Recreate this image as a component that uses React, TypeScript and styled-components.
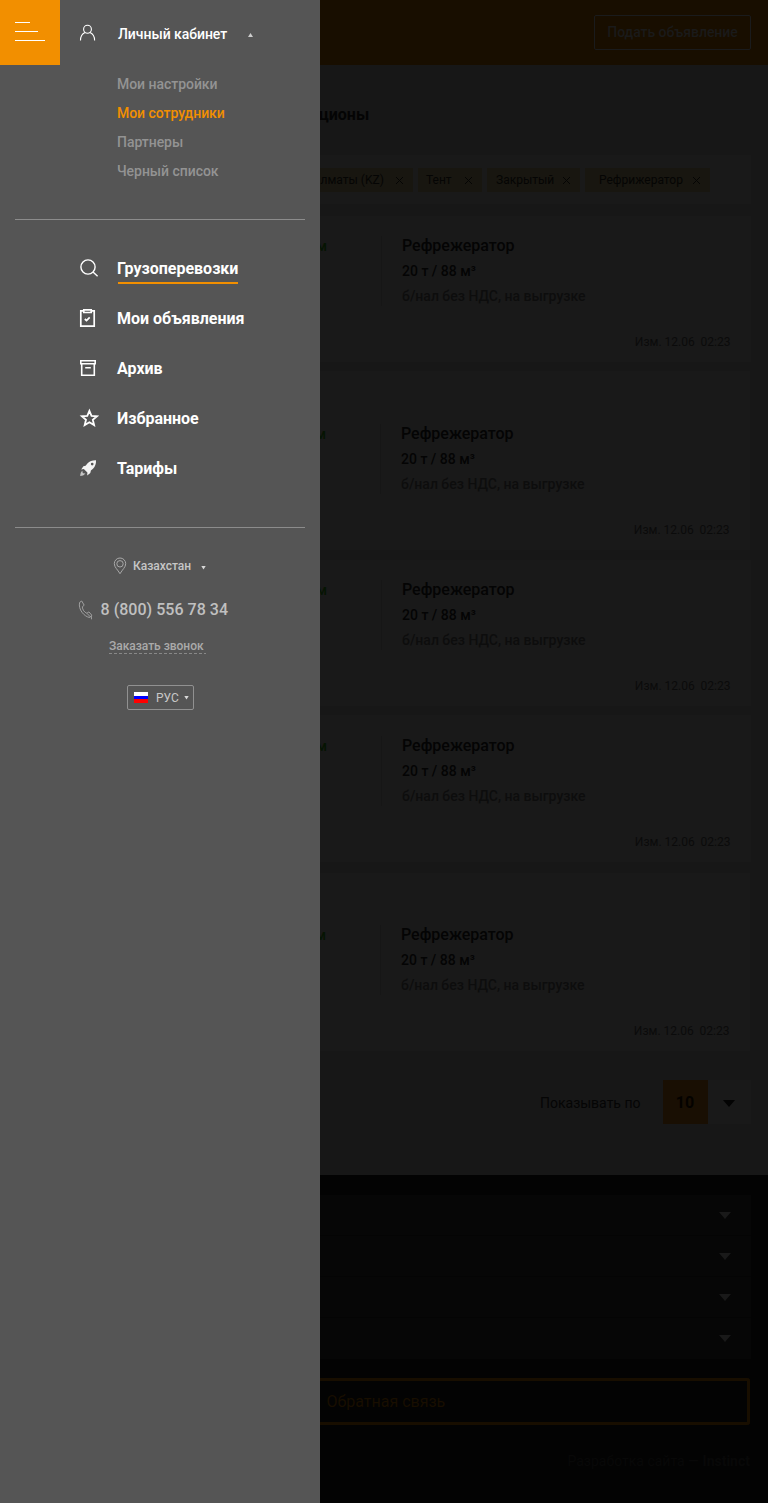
import React from "react";
import styled, { createGlobalStyle } from "styled-components";

const Global = createGlobalStyle`
  * { box-sizing: border-box; }
  body { margin: 0; background: #171717; font-family: Roboto, "Liberation Sans", sans-serif; }
  ul { list-style: none; margin: 0; padding: 0; }
`;

const Shell = styled.div`
  display: flex;
  width: 768px;
  height: 1503px;
  overflow: hidden;
`;

/* Drawer */
const Drawer = styled.aside`
  display: flex;
  flex-direction: column;
  flex: 0 0 320px;
  background: #555;
`;

const DrawerTop = styled.div`
  display: flex;
  align-items: flex-start;
  height: 65px;
`;

const Burger = styled.div`
  display: flex;
  flex-direction: column;
  gap: 8px;
  width: 60px;
  height: 65px;
  padding: 22px 0 0 15px;
  background: #f28f00;
`;

const BurgerLine = styled.span<{ $w: number }>`
  width: ${(p) => p.$w}px;
  height: 1px;
  background: #fff;
`;

const Account = styled.div`
  display: flex;
  align-items: flex-start;
  padding: 24px 0 0 19px;
  color: #fff;
  font-size: 14px;
  font-weight: 500;
  letter-spacing: -0.04px;
  line-height: 20px;
`;

const AccountName = styled.span`
  width: 130px;
  margin-left: 21px;
  white-space: nowrap;
`;

const Caret = styled.i<{ $w: number; $h: number; $color: string; $up?: boolean }>`
  display: block;
  width: ${(p) => p.$w}px;
  height: ${(p) => p.$h}px;
  background: ${(p) => p.$color};
  clip-path: ${(p) => (p.$up ? "polygon(50% 0, 100% 100%, 0 100%)" : "polygon(0 0, 100% 0, 50% 100%)")};
`;

const AccountCaret = styled(Caret)`
  margin-top: 9px;
`;

const RegionCaret = styled(Caret)`
  margin: 3px 0 0 1px;
`;

const SubMenu = styled.ul`
  padding: 5px 0 0 117px;
  height: 154px;
`;

const SubItem = styled.li<{ $active?: boolean }>`
  height: 29px;
  line-height: 29px;
  font-size: 14px;
  font-weight: 500;
  letter-spacing: -0.04px;
  color: ${(p) => (p.$active ? "#f28f00" : "#939393")};
`;

const Divider = styled.div`
  height: 1px;
  margin: 0 15px;
  background: #8c8c8c;
`;

const Nav = styled.nav`
  height: 307px;
  padding-top: 23px;
`;

const NavItem = styled.a`
  display: flex;
  align-items: center;
  height: 50px;
  padding-left: 79px;
  color: #fff;
  font-size: 16px;
  font-weight: 700;
`;

const NavIcon = styled.span`
  width: 38px;
  height: 20px;
  svg { display: block; }
`;

const NavText = styled.span<{ $active?: boolean }>`
  line-height: 27px;
  padding: 2px 0;
  background: ${(p) =>
    p.$active ? "linear-gradient(#f28f00, #f28f00) 1px 100% / 120px 2px no-repeat" : "none"};
`;

const Region = styled.div`
  display: flex;
  align-items: center;
  height: 20px;
  margin: 28px 0 0 113px;
  color: #c6c6c6;
  font-size: 12px;
  font-weight: 500;
`;

const RegionName = styled.span`
  width: 67px;
  margin-left: 6px;
`;

const Phone = styled.div`
  display: flex;
  align-items: center;
  height: 22px;
  margin: 22px 0 0 78px;
  color: #c0c0c0;
  font-size: 16px;
  font-weight: 500;
  letter-spacing: 0.03px;
  svg { margin: 2px 7.5px 0 0; }
`;

const Callback = styled.div`
  width: 97px;
  height: 18px;
  margin: 16px 0 0 109px;
  color: #aaa;
  font-size: 12px;
  font-weight: 500;
  letter-spacing: -0.03px;
  line-height: 20px;
  white-space: nowrap;
  background: repeating-linear-gradient(90deg, #888 0 3px, transparent 3px 5px) bottom / 100% 1px no-repeat;
`;

const Language = styled.div`
  display: flex;
  align-items: center;
  width: 67px;
  height: 25px;
  margin: 31px 0 0 127px;
  padding-left: 6px;
  border: 1px solid #919191;
  border-radius: 2px;
  color: #c8c8c8;
  font-size: 12px;
  font-weight: 400;
`;

const Flag = styled.span`
  width: 14px;
  height: 11px;
  background: linear-gradient(#fff 0 4px, #00f 4px 7px, #f00 7px);
`;

const LanguageName = styled.span`
  width: 28px;
  margin-left: 8px;
`;

/* Dimmed page */
const Page = styled.div`
  display: flex;
  flex-direction: column;
  flex: 0 0 448px;
  overflow: hidden;
  background: #171717;
`;

const Header = styled.header`
  display: flex;
  justify-content: flex-end;
  height: 65px;
  padding: 15px 17px 0 0;
  background: #180e00;
`;

const PostButton = styled.div`
  width: 157px;
  height: 35px;
  border: 1px solid #1a1b1c;
  border-radius: 2px;
  color: #1a1a1a;
  font-size: 14px;
  font-weight: 500;
  letter-spacing: -0.04px;
  line-height: 33px;
  text-align: center;
`;

const Title = styled.h1`
  height: 90px;
  margin: 0 0 0 -1px;
  padding-top: 40px;
  color: #040404;
  font-size: 16px;
  font-weight: 700;
  line-height: 20px;
`;

const Filters = styled.div`
  display: flex;
  gap: 5px;
  width: 431px;
  height: 49px;
  padding-top: 13px;
  background: #191919;
`;

const Chip = styled.div<{ $w: number; $pad: number; $end: number }>`
  display: flex;
  flex: 0 0 ${(p) => p.$w}px;
  align-items: center;
  justify-content: space-between;
  height: 24px;
  padding: 0 ${(p) => p.$end}px 0 ${(p) => p.$pad}px;
  background: #181610;
  color: #050504;
  font-size: 12px;
`;

const ChipText = styled.span`
  white-space: nowrap;
`;

const Card = styled.section<{ $top: number; $h: number; $narrow?: boolean }>`
  display: flex;
  align-items: flex-end;
  width: ${(p) => (p.$narrow ? 430 : 431)}px;
  height: ${(p) => p.$h}px;
  margin-top: ${(p) => p.$top}px;
  padding-bottom: 10px;
  background: #191919;
`;

const Distance = styled.div<{ $narrow?: boolean }>`
  display: flex;
  justify-content: flex-end;
  flex: 0 0 ${(p) => (p.$narrow ? 60 : 61)}px;
  min-width: 0;
  height: 116px;
  padding-right: 54px;
  color: #051402;
  font-size: 14px;
  font-weight: 500;
  line-height: 20px;
`;

const Details = styled.div`
  display: flex;
  flex-direction: column;
  flex: 1;
  height: 116px;
`;

const Specs = styled.div`
  height: 70px;
  padding-left: 20px;
  border-left: 1px solid #161616;
`;

const Body = styled.div`
  color: #040404;
  font-size: 16px;
  font-weight: 500;
  line-height: 20px;
`;

const Capacity = styled.div`
  margin-top: 5px;
  color: #040404;
  font-size: 14px;
  font-weight: 500;
  line-height: 20px;
`;

const Payment = styled.div`
  margin-top: 5px;
  color: #0d0d0d;
  font-size: 14px;
  font-weight: 500;
  line-height: 20px;
`;

const Updated = styled.div`
  margin-top: 26px;
  padding-right: 20.5px;
  color: #0b0b0b;
  font-size: 12px;
  line-height: 20px;
  text-align: right;
  white-space: pre;
`;

const Pager = styled.div`
  display: flex;
  align-items: center;
  justify-content: flex-end;
  height: 44px;
  margin: 29px 17px 51px 0;
  color: #050505;
  font-size: 14px;
`;

const PagerLabel = styled.span`
  padding-top: 2px;
`;

const PageSize = styled.span`
  width: 45px;
  height: 44px;
  margin-left: 22.5px;
  padding-right: 1px;
  background: #190f03;
  color: #040200;
  font-size: 16px;
  font-weight: 700;
  line-height: 46px;
  text-align: center;
`;

const PageSizeToggle = styled.span`
  display: flex;
  align-items: center;
  width: 43px;
  height: 44px;
  padding: 3px 0 0 15px;
  background: #191919;
`;

const Footer = styled.footer`
  flex: 1;
  padding: 20px 17px 0 0;
  background: #030303;
`;

const Accordion = styled.div`
  background: #060606;
`;

const AccordionRow = styled.div`
  display: flex;
  align-items: center;
  justify-content: flex-end;
  height: 41px;
  padding-right: 20px;
  &:not(:last-child) { box-shadow: inset 0 -1px #040404; }
`;

const Feedback = styled.div`
  width: 430px;
  height: 47px;
  margin-top: 19px;
  padding-left: 6.5px;
  border: 3px solid #180e00;
  border-left: 0;
  border-radius: 0 3px 3px 0;
  color: #180e00;
  font-size: 16px;
  line-height: 42px;
`;

const Credits = styled.div`
  margin-top: 26px;
  padding-right: 1px;
  color: #080808;
  font-size: 14px;
  line-height: 20px;
  text-align: right;
  b { font-weight: 700; }
`;

const stroke = { fill: "none", stroke: "#fff" } as const;

const UserIcon = () => (
  <svg width="18" height="18" viewBox="0 0 18 18" {...stroke} strokeWidth="1.1">
    <ellipse cx="8.5" cy="5.3" rx="3.9" ry="4" />
    <path d="M1.5 16.5C1.5 12.5 3.6 9.7 6 8.6M11 8.6c2.4 1.1 4.6 3.9 4.6 7.9" />
  </svg>
);

const SearchIcon = () => (
  <svg width="20" height="20" viewBox="0 0 20 20" {...stroke} strokeWidth="1.4">
    <circle cx="9" cy="9" r="7.1" />
    <path d="M14 14l4.6 4.3" />
  </svg>
);

const ClipboardIcon = () => (
  <svg width="20" height="20" viewBox="0 0 20 20" {...stroke} strokeWidth="1.7">
    <path d="M4.5 2.8H1.8v15.4h13.4V2.8h-2.7" />
    <path d="M4.8 1.8h7.4v2.7H4.8z" />
    <path d="M5.8 11l1.7 1.5 3.2-3.2" />
  </svg>
);

const ArchiveIcon = () => (
  <svg width="20" height="20" viewBox="0 0 20 20" {...stroke} strokeWidth="1.6">
    <path d="M1.8 2.8h14.4v3H1.8z" />
    <path d="M2.7 6v11.2h12.6V6M6.2 9.8h5.6" />
  </svg>
);

const StarIcon = () => (
  <svg width="20" height="20" viewBox="0 0 20 20" {...stroke} strokeWidth="1.8">
    <path d="M10.4 2.9l2.1 5 5.4.4-4.1 3.5 1.3 5.3-4.7-2.9-4.7 2.9L7 11.8 2.9 8.3l5.4-.4z" />
  </svg>
);

const RocketIcon = () => (
  <svg width="20" height="20" viewBox="0 0 20 20" fill="#f4f4f4">
    <path
      fillRule="evenodd"
      d="M17 2.2c-3.500-.1-6.300.9-8.600 3.400L6.600 7.700 4.400 8.200 2.200 11.500l2.600-.4 3.600 3.500-.2 2.800 3.100-2.300.6-2.500 2.100-1.900C16.300 8.300 17.200 5.600 17 2.200zM13.200 4.700a1.350 1.350 0 1 1 0 2.700 1.350 1.350 0 0 1 0-2.700z"
    />
    <path d="M3.600 12.800C1.900 13.700 1.300 15.400 1.200 18c2.600-.2 4.500-1 5.200-2.700l-1.700.2-1.300-1.200z" opacity=".7" />
  </svg>
);

const PinIcon = () => (
  <svg width="14" height="18" viewBox="0 0 14 18" fill="none" stroke="#a8a8a8">
    <path d="M7 16.700C4.700 12.600 1.300 10.300 1.300 6.700a5.700 5.700 0 0 1 11.400 0c0 3.600-3.400 5.900-5.700 10z" />
    <circle cx="7" cy="6.800" r="3.200" />
  </svg>
);

const PhoneIcon = () => (
  <svg width="15" height="20" viewBox="0 0 15 20" fill="none" stroke="#a0a0a0">
    <path d="M1.700 2.300L3.700 1l2.500 4.200-1.900 1.600c.2 3 2 5.500 4.600 6.500l2-1.400 2.900 3.300-2 2.300C6.500 17-.3 9.300 1.700 2.300zM9 13.400l3.700 3.800M13.300 15.800l.2 3.500" />
  </svg>
);

const CloseIcon = () => (
  <svg width="9" height="9" viewBox="0 0 9 9" fill="none" stroke="#050504">
    <path d="M1 1l7 7M8 1L1 8" />
  </svg>
);

const navigation = [
  { label: "Грузоперевозки", icon: <SearchIcon />, active: true },
  { label: "Мои объявления", icon: <ClipboardIcon /> },
  { label: "Архив", icon: <ArchiveIcon /> },
  { label: "Избранное", icon: <StarIcon /> },
  { label: "Тарифы", icon: <RocketIcon /> },
];

const chips = [
  { text: "лматы (KZ)", w: 93, pad: 0.5, end: 9 },
  { text: "Тент", w: 64, pad: 8, end: 9 },
  { text: "Закрытый", w: 93, pad: 9, end: 9 },
  { text: "Рефрижератор", w: 125, pad: 14, end: 9 },
];

const cards = [
  { top: 12, h: 146 },
  { top: 9, h: 179, narrow: true },
  { top: 10, h: 146 },
  { top: 9, h: 147 },
  { top: 11, h: 178, narrow: true },
];

export default function App() {
  return (
    <>
      <Global />
      <Shell>
        <Drawer>
          <DrawerTop>
            <Burger>
              <BurgerLine $w={15} />
              <BurgerLine $w={23} />
              <BurgerLine $w={30} />
            </Burger>
            <Account>
              <UserIcon />
              <AccountName>Личный кабинет</AccountName>
              <AccountCaret $w={5} $h={4} $color="#ccc" $up />
            </Account>
          </DrawerTop>
          <SubMenu>
            <SubItem>Мои настройки</SubItem>
            <SubItem $active>Мои сотрудники</SubItem>
            <SubItem>Партнеры</SubItem>
            <SubItem>Черный список</SubItem>
          </SubMenu>
          <Divider />
          <Nav>
            {navigation.map((n) => (
              <NavItem key={n.label}>
                <NavIcon>{n.icon}</NavIcon>
                <NavText $active={n.active}>{n.label}</NavText>
              </NavItem>
            ))}
          </Nav>
          <Divider />
          <Region>
            <PinIcon />
            <RegionName>Казахстан</RegionName>
            <RegionCaret $w={5} $h={4} $color="#d8d8d8" />
          </Region>
          <Phone>
            <PhoneIcon />8 (800) 556 78 34
          </Phone>
          <Callback>Заказать звонок</Callback>
          <Language>
            <Flag />
            <LanguageName>РУС</LanguageName>
            <Caret $w={5} $h={4} $color="#d8d8d8" />
          </Language>
        </Drawer>
        <Page>
          <Header>
            <PostButton>Подать объявление</PostButton>
          </Header>
          <Title>ционы</Title>
          <Filters>
            {chips.map((c) => (
              <Chip key={c.text} $w={c.w} $pad={c.pad} $end={c.end}>
                <ChipText>{c.text}</ChipText>
                <CloseIcon />
              </Chip>
            ))}
          </Filters>
          {cards.map((c, i) => (
            <Card key={i} $top={c.top} $h={c.h} $narrow={c.narrow}>
              <Distance $narrow={c.narrow}>м</Distance>
              <Details>
                <Specs>
                  <Body>Рефрежератор</Body>
                  <Capacity>20 т / 88 м³</Capacity>
                  <Payment>б/нал без НДС, на выгрузке</Payment>
                </Specs>
                <Updated>{"Изм. 12.06  02:23"}</Updated>
              </Details>
            </Card>
          ))}
          <Pager>
            <PagerLabel>Показывать по</PagerLabel>
            <PageSize>10</PageSize>
            <PageSizeToggle>
              <Caret $w={12} $h={7} $color="#030303" />
            </PageSizeToggle>
          </Pager>
          <Footer>
            <Accordion>
              {[0, 1, 2, 3].map((i) => (
                <AccordionRow key={i}>
                  <Caret $w={12} $h={7} $color="#191919" />
                </AccordionRow>
              ))}
            </Accordion>
            <Feedback>Обратная связь</Feedback>
            <Credits>
              Разработка сайта — <b>Instinct</b>
            </Credits>
          </Footer>
        </Page>
      </Shell>
    </>
  );
}
